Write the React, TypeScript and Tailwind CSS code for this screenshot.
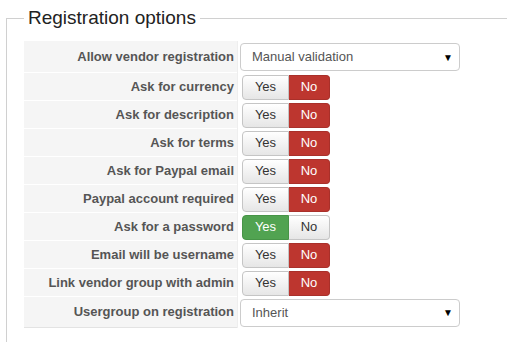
import React from 'react'

type Row =
  | { label: string; kind: 'select'; value: string }
  | { label: string; kind: 'toggle'; yes: boolean }

const rows: Row[] = [
  { label: 'Allow vendor registration', kind: 'select', value: 'Manual validation' },
  { label: 'Ask for currency', kind: 'toggle', yes: false },
  { label: 'Ask for description', kind: 'toggle', yes: false },
  { label: 'Ask for terms', kind: 'toggle', yes: false },
  { label: 'Ask for Paypal email', kind: 'toggle', yes: false },
  { label: 'Paypal account required', kind: 'toggle', yes: false },
  { label: 'Ask for a password', kind: 'toggle', yes: true },
  { label: 'Email will be username', kind: 'toggle', yes: false },
  { label: 'Link vendor group with admin', kind: 'toggle', yes: false },
  { label: 'Usergroup on registration', kind: 'select', value: 'Inherit' },
]

function Toggle({ yes }: { yes: boolean }) {
  const plain =
    'bg-gradient-to-b from-white to-[#e6e6e6] border-[#c5c5c5] text-[#333]'
  return (
    <div className="ml-[2px] flex h-[25px] text-[13px]">
      <span
        className={
          'flex w-[47px] items-center justify-center rounded-l-[4px] border ' +
          (yes ? 'bg-[#51a351] border-[#479447] text-white' : plain)
        }
      >
        Yes
      </span>
      <span
        className={
          'flex w-[41px] items-center justify-center rounded-r-[4px] border border-l-0 ' +
          (!yes ? 'bg-[#bd362f] border-[#a9302a] text-white' : plain)
        }
      >
        No
      </span>
    </div>
  )
}

function Select({ value }: { value: string }) {
  return (
    <div className="flex h-[28px] w-[220px] items-center justify-between rounded-[4px] border border-[#ccc] bg-white pl-[11px] pr-[6px] text-[13px] text-[#555]">
      <span>{value}</span>
      <span className="text-[10px] text-black">▼</span>
    </div>
  )
}

export default function App() {
  return (
    <div
      className="h-[342px] w-[507px] overflow-hidden bg-white"
      style={{ fontFamily: '"Liberation Sans", Arial, sans-serif' }}
    >
      <fieldset className="ml-[6px] h-[400px] border-l border-t border-[#d0d0d0] pl-[17px] pt-[5px]">
        <legend className="px-[4px] text-[19px] leading-[36px] text-[#222]">
          Registration options
        </legend>
        <div className="grid w-[440px] grid-cols-[213px_1fr]">
          {rows.map((r, i) => {
            const last = i === rows.length - 1
            const h = r.kind === 'select' ? (i === 0 ? 'h-[32px]' : 'h-[31px]') : 'h-[28px]'
            return (
              <React.Fragment key={r.label}>
                <div
                  className={
                    'flex items-center justify-end bg-[#f5f5f5] pr-[3px] text-[13px] font-bold text-[#555] ' +
                    h +
                    (last ? ' border-b border-[#e3e3e3]' : ' border-b border-white')
                  }
                >
                  {r.label}
                </div>
                <div className={'flex items-center border-l border-[#eee] pl-[2px] ' + h}>
                  {r.kind === 'select' ? <Select value={r.value} /> : <Toggle yes={r.yes} />}
                </div>
              </React.Fragment>
            )
          })}
        </div>
      </fieldset>
    </div>
  )
}
